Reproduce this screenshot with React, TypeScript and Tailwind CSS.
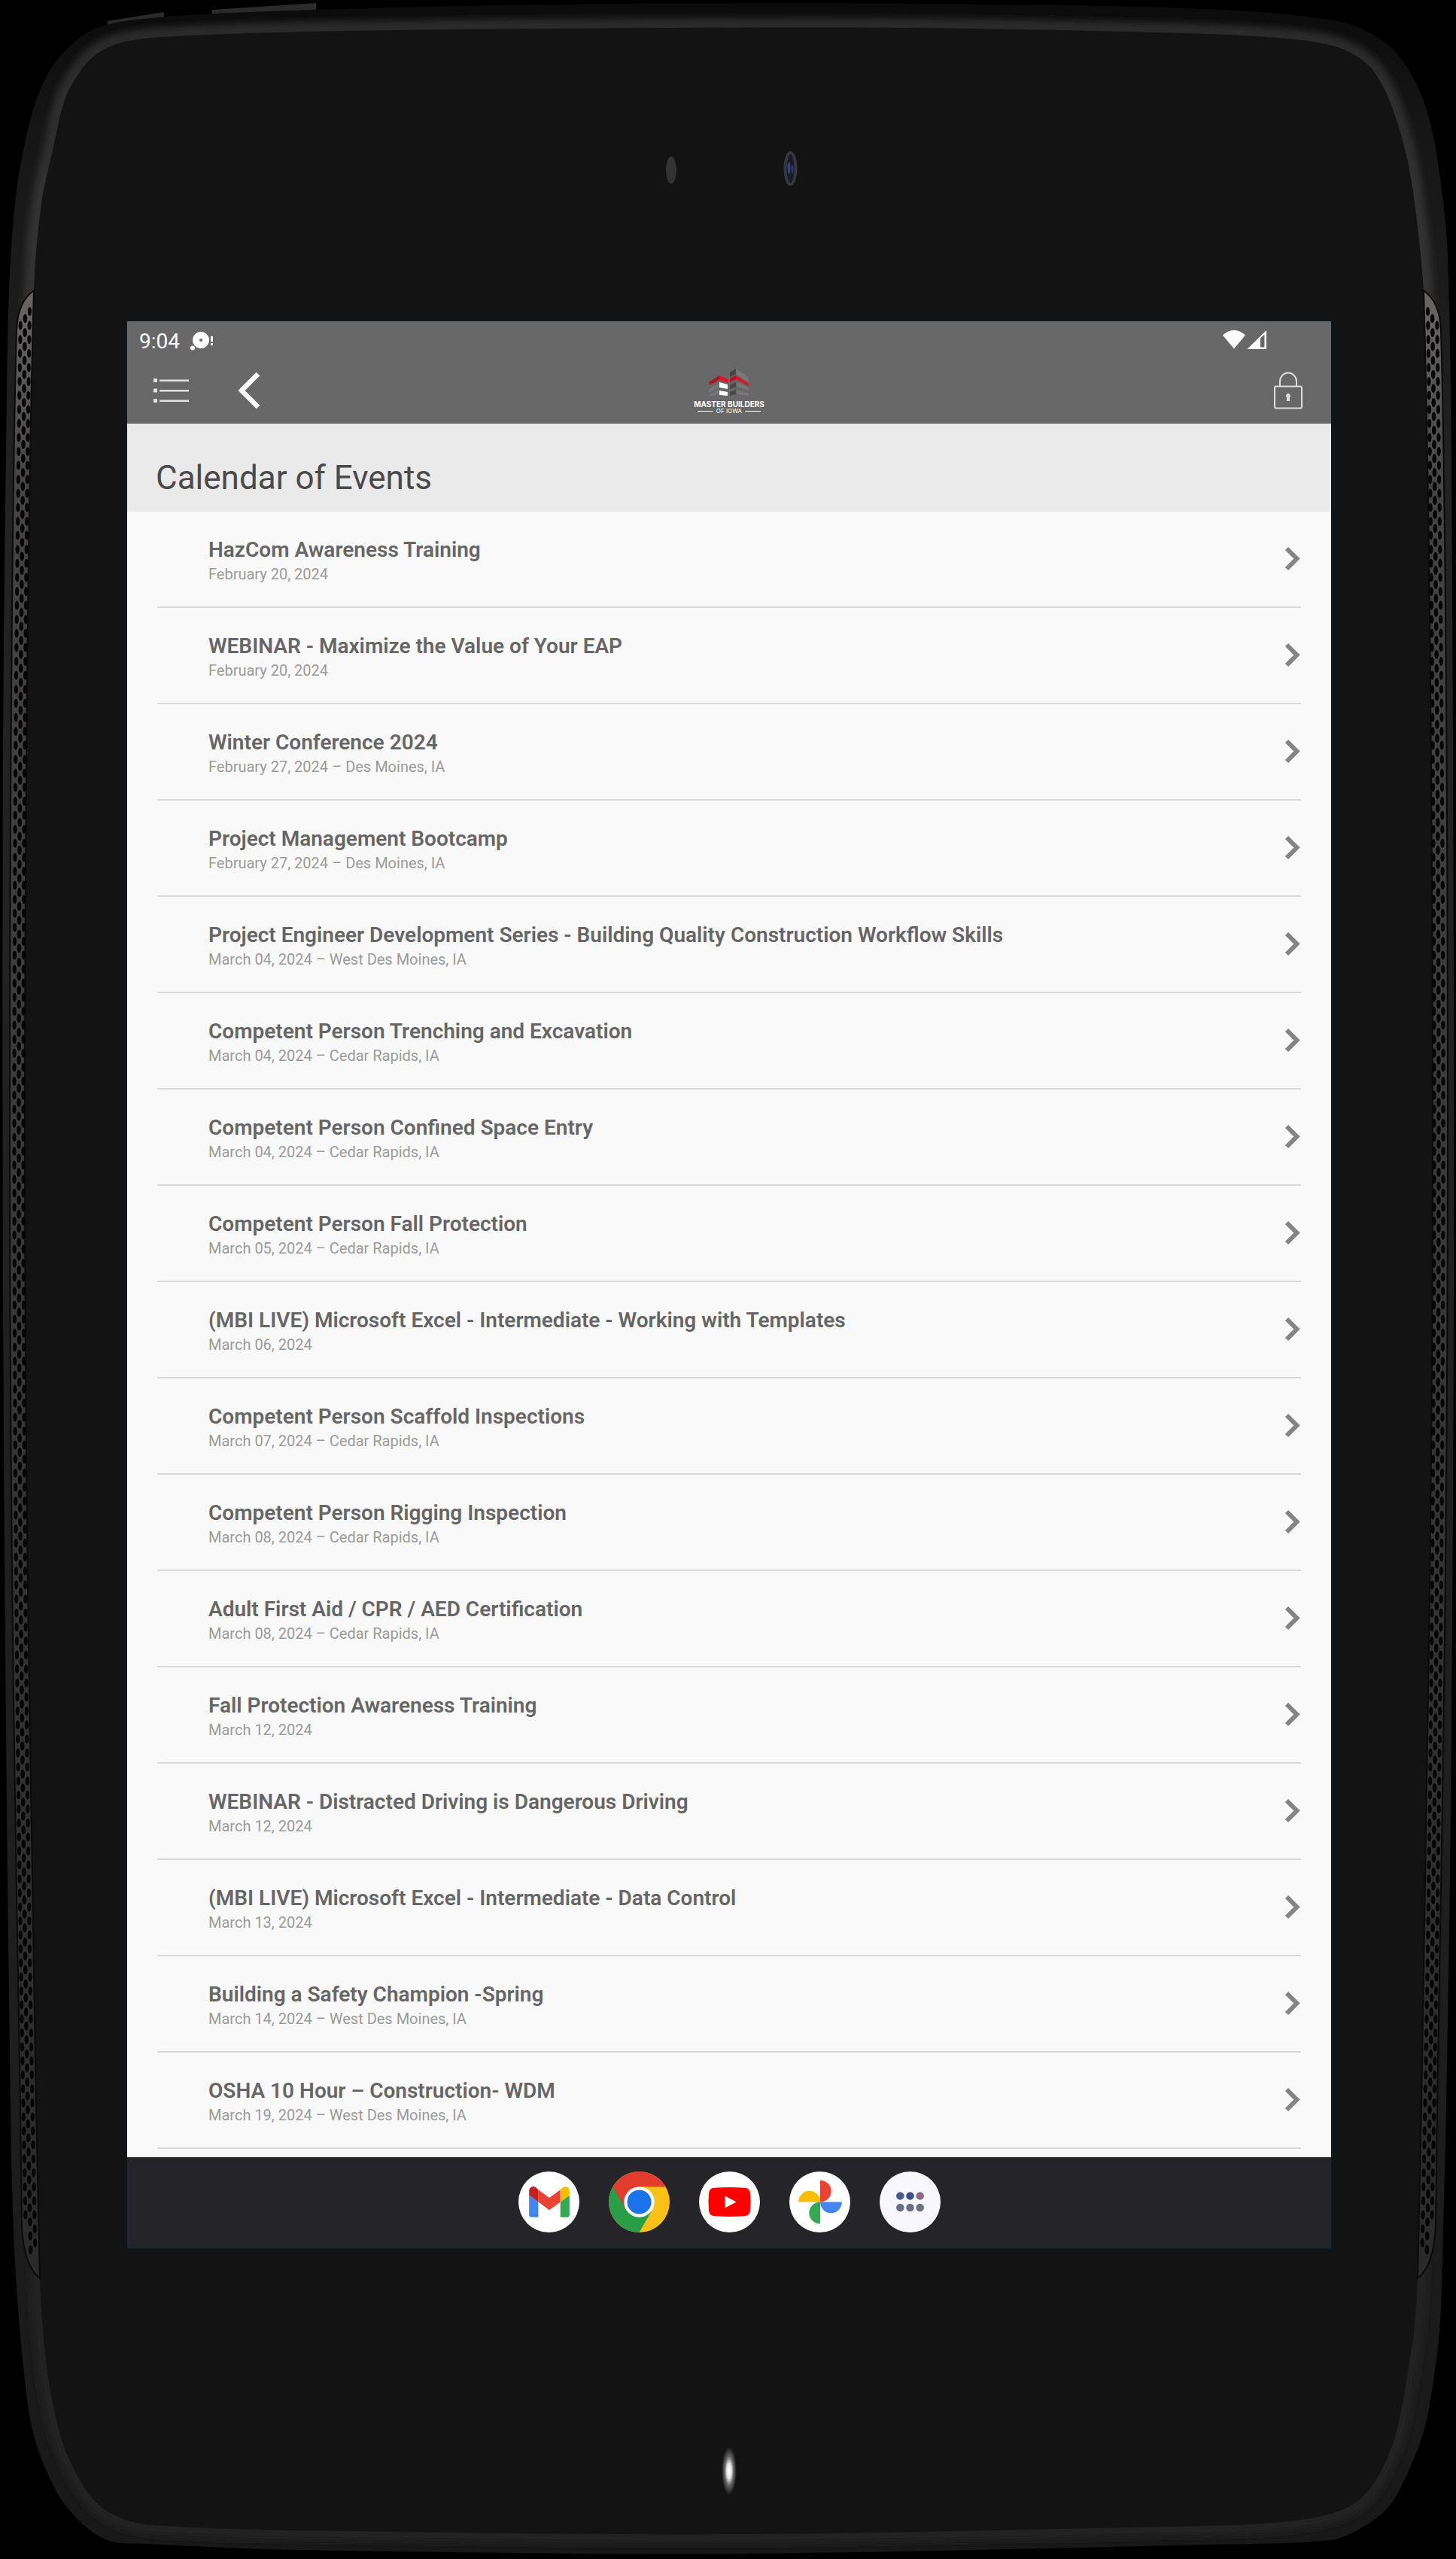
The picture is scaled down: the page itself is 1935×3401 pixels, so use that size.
import type { ReactNode } from 'react';

interface InterfaceEvent {
  title: string;
  date: string;
  location?: string;
}

const events: InterfaceEvent[] = [
  { title: 'HazCom Awareness Training', date: 'February 20, 2024' },
  { title: 'WEBINAR - Maximize the Value of Your EAP', date: 'February 20, 2024' },
  { title: 'Winter Conference 2024', date: 'February 27, 2024', location: 'Des Moines, IA' },
  { title: 'Project Management Bootcamp', date: 'February 27, 2024', location: 'Des Moines, IA' },
  {
    title: 'Project Engineer Development Series - Building Quality Construction Workflow Skills',
    date: 'March 04, 2024',
    location: 'West Des Moines, IA',
  },
  { title: 'Competent Person Trenching and Excavation', date: 'March 04, 2024', location: 'Cedar Rapids, IA' },
  { title: 'Competent Person Confined Space Entry', date: 'March 04, 2024', location: 'Cedar Rapids, IA' },
  { title: 'Competent Person Fall Protection', date: 'March 05, 2024', location: 'Cedar Rapids, IA' },
  { title: '(MBI LIVE) Microsoft Excel - Intermediate - Working with Templates', date: 'March 06, 2024' },
  { title: 'Competent Person Scaffold Inspections', date: 'March 07, 2024', location: 'Cedar Rapids, IA' },
  { title: 'Competent Person Rigging Inspection', date: 'March 08, 2024', location: 'Cedar Rapids, IA' },
  { title: 'Adult First Aid / CPR / AED Certification', date: 'March 08, 2024', location: 'Cedar Rapids, IA' },
  { title: 'Fall Protection Awareness Training', date: 'March 12, 2024' },
  { title: 'WEBINAR - Distracted Driving is Dangerous Driving', date: 'March 12, 2024' },
  { title: '(MBI LIVE) Microsoft Excel - Intermediate - Data Control', date: 'March 13, 2024' },
  { title: 'Building a Safety Champion -Spring', date: 'March 14, 2024', location: 'West Des Moines, IA' },
  { title: 'OSHA 10 Hour – Construction- WDM', date: 'March 19, 2024', location: 'West Des Moines, IA' },
];

type Point = [number, number];

// Closed smooth curve through all the points
const smoothPath = (points: Point[]) => {
  const n = points.length;
  const parts = points.map((p1, i) => {
    const p0 = points[(i + n - 1) % n];
    const p2 = points[(i + 1) % n];
    const p3 = points[(i + 2) % n];
    // tangents are limited by the segment length so long sides don't bulge
    const len = Math.hypot(p2[0] - p1[0], p2[1] - p1[1]);
    const ta = Math.hypot(p2[0] - p0[0], p2[1] - p0[1]);
    const tb = Math.hypot(p3[0] - p1[0], p3[1] - p1[1]);
    const a = len / ta / 3;
    const b = len / tb / 3;
    const c1 = [p1[0] + (p2[0] - p0[0]) * a, p1[1] + (p2[1] - p0[1]) * a];
    const c2 = [p2[0] - (p3[0] - p1[0]) * b, p2[1] - (p3[1] - p1[1]) * b];
    return `C${c1[0]} ${c1[1]} ${c2[0]} ${c2[1]} ${p2[0]} ${p2[1]}`;
  });
  return `M${points[0][0]} ${points[0][1]} ${parts.join(' ')} Z`;
};

const bodyPath = smoothPath([
  [12, 385], [20, 270], [31, 200], [50, 128], [76, 80], [123, 40], [200, 24], [420, 13], [740, 6],
  [1200, 5], [1580, 11], [1777, 28], [1839, 55], [1870, 90], [1894, 140], [1910, 210], [1924, 340],
  [1930, 800], [1932, 1700], [1928, 2400], [1922, 2800], [1918, 2960], [1914, 3085], [1907, 3150],
  [1893, 3228], [1870, 3288], [1845, 3332], [1807, 3361], [1767, 3376], [1600, 3382], [967, 3394],
  [400, 3389], [200, 3381], [140, 3375], [93, 3337], [65, 3291], [43, 3229], [31, 3145], [22, 3040],
  [17, 2938], [14, 2800], [8, 2300], [4, 1700], [4, 1000], [8, 600],
]);

const glassPath = smoothPath([
  [45, 385], [55, 270], [70, 200], [86, 133], [105, 97], [127, 73], [160, 57], [220, 49], [407, 42],
  [740, 38], [1200, 37], [1604, 45], [1728, 53], [1775, 62], [1805, 76], [1828, 98], [1851, 145],
  [1872, 220], [1886, 320], [1893, 410], [1900, 800], [1904, 1500], [1900, 2300], [1892, 2800],
  [1884, 3027], [1879, 3100], [1872, 3145], [1863, 3199], [1851, 3248], [1826, 3300], [1797, 3329],
  [1757, 3344], [1690, 3353], [1600, 3357], [967, 3368], [400, 3363], [217, 3357], [167, 3349],
  [127, 3325], [97, 3279], [78, 3229], [62, 3145], [53, 3030], [48, 2800], [38, 2300], [33, 1500],
  [36, 800],
]);

// Rows of holes in the side speaker grilles
const grilleRows = Array.from({ length: 139 }, (_, i) => {
  const y = 414 + i * 18.6;
  const t = (y - 1500) / 1400;
  return { y, x: 19 + 14 * t * t };
});

const grillePath =
  'M45 386 C32 396 23 410 22 440 C16 640 13 1100 13 1500 C13 2100 22 2500 27 2800 L29 2960 C31 2995 40 3018 53 3028 L48 2800 C40 2300 33 2000 33 1500 C33 1200 36 700 45 386 Z';

const Grille = () => (
  <>
    <path d={grillePath} fill="url(#mesh)" stroke="#0a0a0a" strokeWidth="2" />
    <g fill="#050505">
      {grilleRows.map(({ x, y }, i) => (
        <g key={i}>
          {i > 0 && i < 137 && <ellipse cx={x} cy={y} rx="2.6" ry="6" />}
          <ellipse cx={x + 6} cy={y + 9.3} rx="2.8" ry="6" />
          <ellipse cx={x + 12} cy={y} rx="2.6" ry="6" />
        </g>
      ))}
    </g>
  </>
);

const TabletBody = () => (
  <svg
    className="absolute inset-0 h-full w-full"
    viewBox="0 0 1935 3401"
    preserveAspectRatio="none"
    aria-hidden="true"
  >
    <defs>
      <linearGradient id="rim" x1="0" y1="0" x2="0" y2="1">
        <stop offset="0" stopColor="#0b0b0b" />
        <stop offset="0.05" stopColor="#161616" />
        <stop offset="0.2" stopColor="#232323" />
        <stop offset="0.8" stopColor="#1e1e1e" />
        <stop offset="1" stopColor="#181818" />
      </linearGradient>
      <linearGradient id="edge" x1="0" y1="0" x2="0" y2="1">
        <stop offset="0" stopColor="#2b2b2b" />
        <stop offset="0.1" stopColor="#333333" />
        <stop offset="0.3" stopColor="#353535" />
        <stop offset="0.8" stopColor="#242424" />
        <stop offset="1" stopColor="#242424" />
      </linearGradient>
      <linearGradient id="mesh" x1="0" y1="0" x2="0" y2="1">
        <stop offset="0" stopColor="#6a6666" />
        <stop offset="0.1" stopColor="#454343" />
        <stop offset="1" stopColor="#2a2a2a" />
      </linearGradient>
      <filter id="soft" x="-1" y="-1" width="3" height="3">
        <feGaussianBlur stdDeviation="2.5" />
      </filter>
      <filter id="softer" x="-0.02" y="-0.02" width="1.04" height="1.04">
        <feGaussianBlur stdDeviation="5" />
      </filter>
      <radialGradient id="led">
        <stop offset="0" stopColor="#ffffff" />
        <stop offset="0.3" stopColor="#e8e8e8" />
        <stop offset="0.6" stopColor="#666666" />
        <stop offset="1" stopColor="#131313" />
      </radialGradient>
      <clipPath id="body">
        <path d={bodyPath} />
      </clipPath>
    </defs>
    <path
      d="M143 36L143 28L218 16L218 27L143 45ZM282 20L282 13L420 4L420 15L282 28Z"
      fill="#2a2a2a"
    />
    <g clipPath="url(#body)">
      <rect width="1935" height="3401" fill="url(#rim)" />
      <path d={glassPath} fill="none" stroke="url(#edge)" strokeWidth="26" filter="url(#softer)" />
    </g>
    <path d={glassPath} fill="#131313" />
    <Grille />
    <g transform="translate(1937 0) scale(-1 1)">
      <Grille />
    </g>
    {/* sensor, camera, indicator light */}
    <ellipse cx="892" cy="226" rx="7" ry="18" fill="#333333" />
    <ellipse cx="1050.5" cy="224" rx="7" ry="21" fill="#1b1b26" stroke="#34373b" strokeWidth="4" />
    <ellipse cx="1048.5" cy="223" rx="2" ry="8" fill="#3a3c86" />
    <ellipse cx="1053" cy="225" rx="1.5" ry="6" fill="#34346a" />
    <ellipse cx="969" cy="3284" rx="10" ry="32" fill="url(#led)" />
  </svg>
);

const StatusBar = () => (
  <div className="flex h-12 items-end pr-[86px] pl-4 text-[28px] leading-8 text-white">
    <span className="flex flex-1 items-center pb-[5px]">
      9:04
      <svg className="ml-3 h-8 w-9" viewBox="0 0 36 32" fill="#fff">
        <path fillRule="evenodd" d="M16 3a11 11 0 1 0 0 22a11 11 0 1 0 0-22ZM16 12a2 2 0 1 1 0 4a2 2 0 1 1 0-4Z" />
        <circle cx="5" cy="24.500" r="3" />
        <path d="M29 9h3v7h-3zM29 18h3v3h-3z" />
      </svg>
    </span>
    <svg className="mb-2.5 h-7 w-[60px]" viewBox="0 0 60 28" fill="#fff">
      <path d="M2 8.500Q17 -5 32 8.500L17 26.500Z" />
      <path fillRule="evenodd" d="M34.500 27L60 2V27ZM52 12.500V24.500H57.500V7.500Z" />
    </svg>
  </div>
);

const MasterBuildersLogo = () => (
  <div className="flex flex-col items-center font-[Inter,sans-serif] text-white">
    <svg className="h-10 w-14" viewBox="0 0 56 40">
      <path d="M29 7L37 2V9L29 13Z" fill="#454545" />
      <path d="M37 2L54 14V20L37 9Z" fill="#7a7a7a" />
      <path d="M1 20L15 11L26 16V21L15 17L2 24Z" fill="#e4102c" />
      <path d="M1 20L15 11V17L3 23Z" fill="#9c1c2c" />
      <path d="M29 15L37 11L54 22L53 25L37 16L29 20Z" fill="#e4102c" />
      <path d="M29 15L37 11V16L29 20Z" fill="#b0152a" />
      <path d="M15 20L26 23V29L15 27ZM15 31L26 33V38L15 37Z" fill="#fff" />
      <path d="M1 29L14 22V27L1 34ZM2 36L14 30V35L4 39Z" fill="#777" />
      <path d="M29 24L37 20V26L29 29ZM29 33L37 30V36L29 38Z" fill="#484848" />
      <path d="M38 20L54 27V31L38 26ZM38 30L54 35V38L38 36Z" fill="#777" />
    </svg>
    <span className="mt-1 text-[10px] leading-[10px] font-bold whitespace-nowrap">MASTER BUILDERS</span>
    <span className="flex items-center gap-1 text-[8px] leading-[8px] whitespace-nowrap">
      <span className="h-px w-[21px] bg-white" />
      OF IOWA
      <span className="h-px w-[21px] bg-white" />
    </span>
  </div>
);

const Toolbar = () => (
  <div className="grid h-22 grid-cols-[1fr_auto_1fr] items-center px-[35px]">
    <div className="flex items-center gap-[60px]">
      <button type="button" aria-label="Menu">
        <svg className="h-11 w-[50px]" viewBox="2 0 50 44" fill="#e2e2e2">
          <path d="M2 6h5v5H2zM2 19.500h5v5H2zM2 33h5v5H2zM10 7.500h39v2.500H10zM10 21h39v2.500H10zM10 34.500h39v2.500H10z" />
        </svg>
      </button>
      <button type="button" aria-label="Back">
        <svg className="h-[50px] w-8" viewBox="0 0 32 50" fill="none" stroke="#fff" strokeWidth="6.500">
          <path d="M29 3L7 25L29 47" />
        </svg>
      </button>
    </div>
    <MasterBuildersLogo />
    <button type="button" aria-label="Login" className="justify-self-end">
      <svg className="h-[50px] w-[42px]" viewBox="0 0 42 50" fill="none" stroke="#dedede" strokeWidth="2">
        <rect x="2" y="19.500" width="36" height="29" rx="2" />
        <path d="M9 19V13a11 11.500 0 0 1 22 0V19" />
        <path d="M20 29a3 3 0 0 1 2 5.200V39h-4v-4.800A3 3 0 0 1 20 29Z" fill="#dedede" stroke="none" />
      </svg>
    </button>
  </div>
);

const EventRow = ({ event }: { event: InterfaceEvent }) => (
  <li className="h-32 border-b-2 border-[#dadada]">
    <a href="#" className="flex h-full items-center justify-between pl-[68px]">
      <span className="flex flex-col self-start pt-[33px]">
        <span className="text-[28px] leading-9 font-semibold text-[#666666]">{event.title}</span>
        <span className="text-[20px] leading-7 text-[#9b9b9b]">
          {event.date}
          {event.location && ` – ${event.location}`}
        </span>
      </span>
      <svg className="h-9 w-6" viewBox="0 0 24 36" fill="none" stroke="#848484" strokeWidth="6">
        <path d="M5 4L18.500 17.500L5 31" />
      </svg>
    </a>
  </li>
);

const DockButton = ({ label, children }: { label: string; children: ReactNode }) => (
  <button type="button" aria-label={label} className="h-[81px] w-[81px]">
    <svg className="h-full w-full" viewBox="0 0 80 80">
      {children}
    </svg>
  </button>
);

const Dock = () => (
  <nav className="flex h-[121px] items-center justify-center gap-[39px] border-b-2 border-[#1c282d] bg-[#252429]">
    <DockButton label="Gmail">
      <circle cx="40" cy="40" r="40" fill="#fff" />
      <path d="M14 31L26 40V60H17a3 3 0 0 1-3-3Z" fill="#4285f4" />
      <path d="M67 31L55 40V60H64a3 3 0 0 0 3-3Z" fill="#34a853" />
      <path d="M26 24L40.500 34.500L55 24V40L40.500 50.500L26 40Z" fill="#ea4335" />
      <path d="M55 24L57.500 21.500C61.500 18 67 20.500 67 25.500V31L55 40Z" fill="#fbbc04" />
      <path d="M26 24L23.500 21.500C19.500 18 14 20.500 14 25.500V31L26 40Z" fill="#c5221f" />
    </DockButton>
    <DockButton label="Chrome">
      <circle cx="40" cy="40" r="40" fill="#fbc116" />
      <path d="M5.400 20A40 40 0 0 0 40 80L57.300 50L40 40Z" fill="#2a9d47" />
      <path d="M5.400 20A40 40 0 0 1 74.600 20H40L22.700 50Z" fill="#e33b2e" />
      <circle cx="40" cy="40" r="20" fill="#fff" />
      <circle cx="40" cy="40" r="15.800" fill="#1a73e8" />
    </DockButton>
    <DockButton label="YouTube">
      <circle cx="40" cy="40" r="40" fill="#fff" />
      <path d="M20 21.500Q40 20 60 21.500Q66.500 22 67 28Q68.500 40 67 52Q66.500 57.500 60 58.500Q40 60 20 58.500Q13.500 57.500 13 52Q11.500 40 13 28Q13.500 22 20 21.500Z" fill="#f00" />
      <path d="M34 32L49 40L34 48Z" fill="#fff" />
    </DockButton>
    <DockButton label="Photos">
      <circle cx="40" cy="40" r="40" fill="#fff" />
      <path d="M40.500 11.500A14.500 14.250 0 0 1 40.500 40Z" fill="#ea4335" />
      <path d="M69 40A14.250 14.500 0 0 1 40.500 40Z" fill="#4285f4" />
      <path d="M40.500 68.500A14.500 14.250 0 0 1 40.500 40Z" fill="#34a853" />
      <path d="M12 40A14.250 14.500 0 0 1 40.500 40Z" fill="#fbbc04" />
    </DockButton>
    <DockButton label="All apps">
      <circle cx="40" cy="40" r="40" fill="#f9f7fe" />
      <circle cx="27" cy="32" r="5.200" fill="#475a90" />
      <circle cx="40" cy="32" r="5.200" fill="#3c4f8b" />
      <circle cx="53" cy="32" r="5.200" fill="#8a6a85" />
      <circle cx="27" cy="47.500" r="5.200" fill="#687284" />
      <circle cx="40" cy="47.500" r="5.200" fill="#687284" />
      <circle cx="53" cy="47.500" r="5.200" fill="#687284" />
    </DockButton>
  </nav>
);

export default function App() {
  return (
    <div className="relative bg-black pt-[427px] pr-[166px] pb-[413px] pl-[169px] font-[Roboto,sans-serif]">
      <TabletBody />
      <main className="relative bg-[#f9f9f9] shadow-[0_0_0_2px_#0e171d]">
        <header className="bg-[#686868]">
          <StatusBar />
          <Toolbar />
        </header>
        <div className="h-[117px] bg-[#eaeaea] px-[38px] pt-12">
          <h1 className="text-[44px] leading-[48px] text-[#4a4a4a]">Calendar of Events</h1>
        </div>
        <ul className="px-10 pb-[11px]">
          {events.map((event) => (
            <EventRow key={event.title} event={event} />
          ))}
        </ul>
        <Dock />
      </main>
    </div>
  );
}
